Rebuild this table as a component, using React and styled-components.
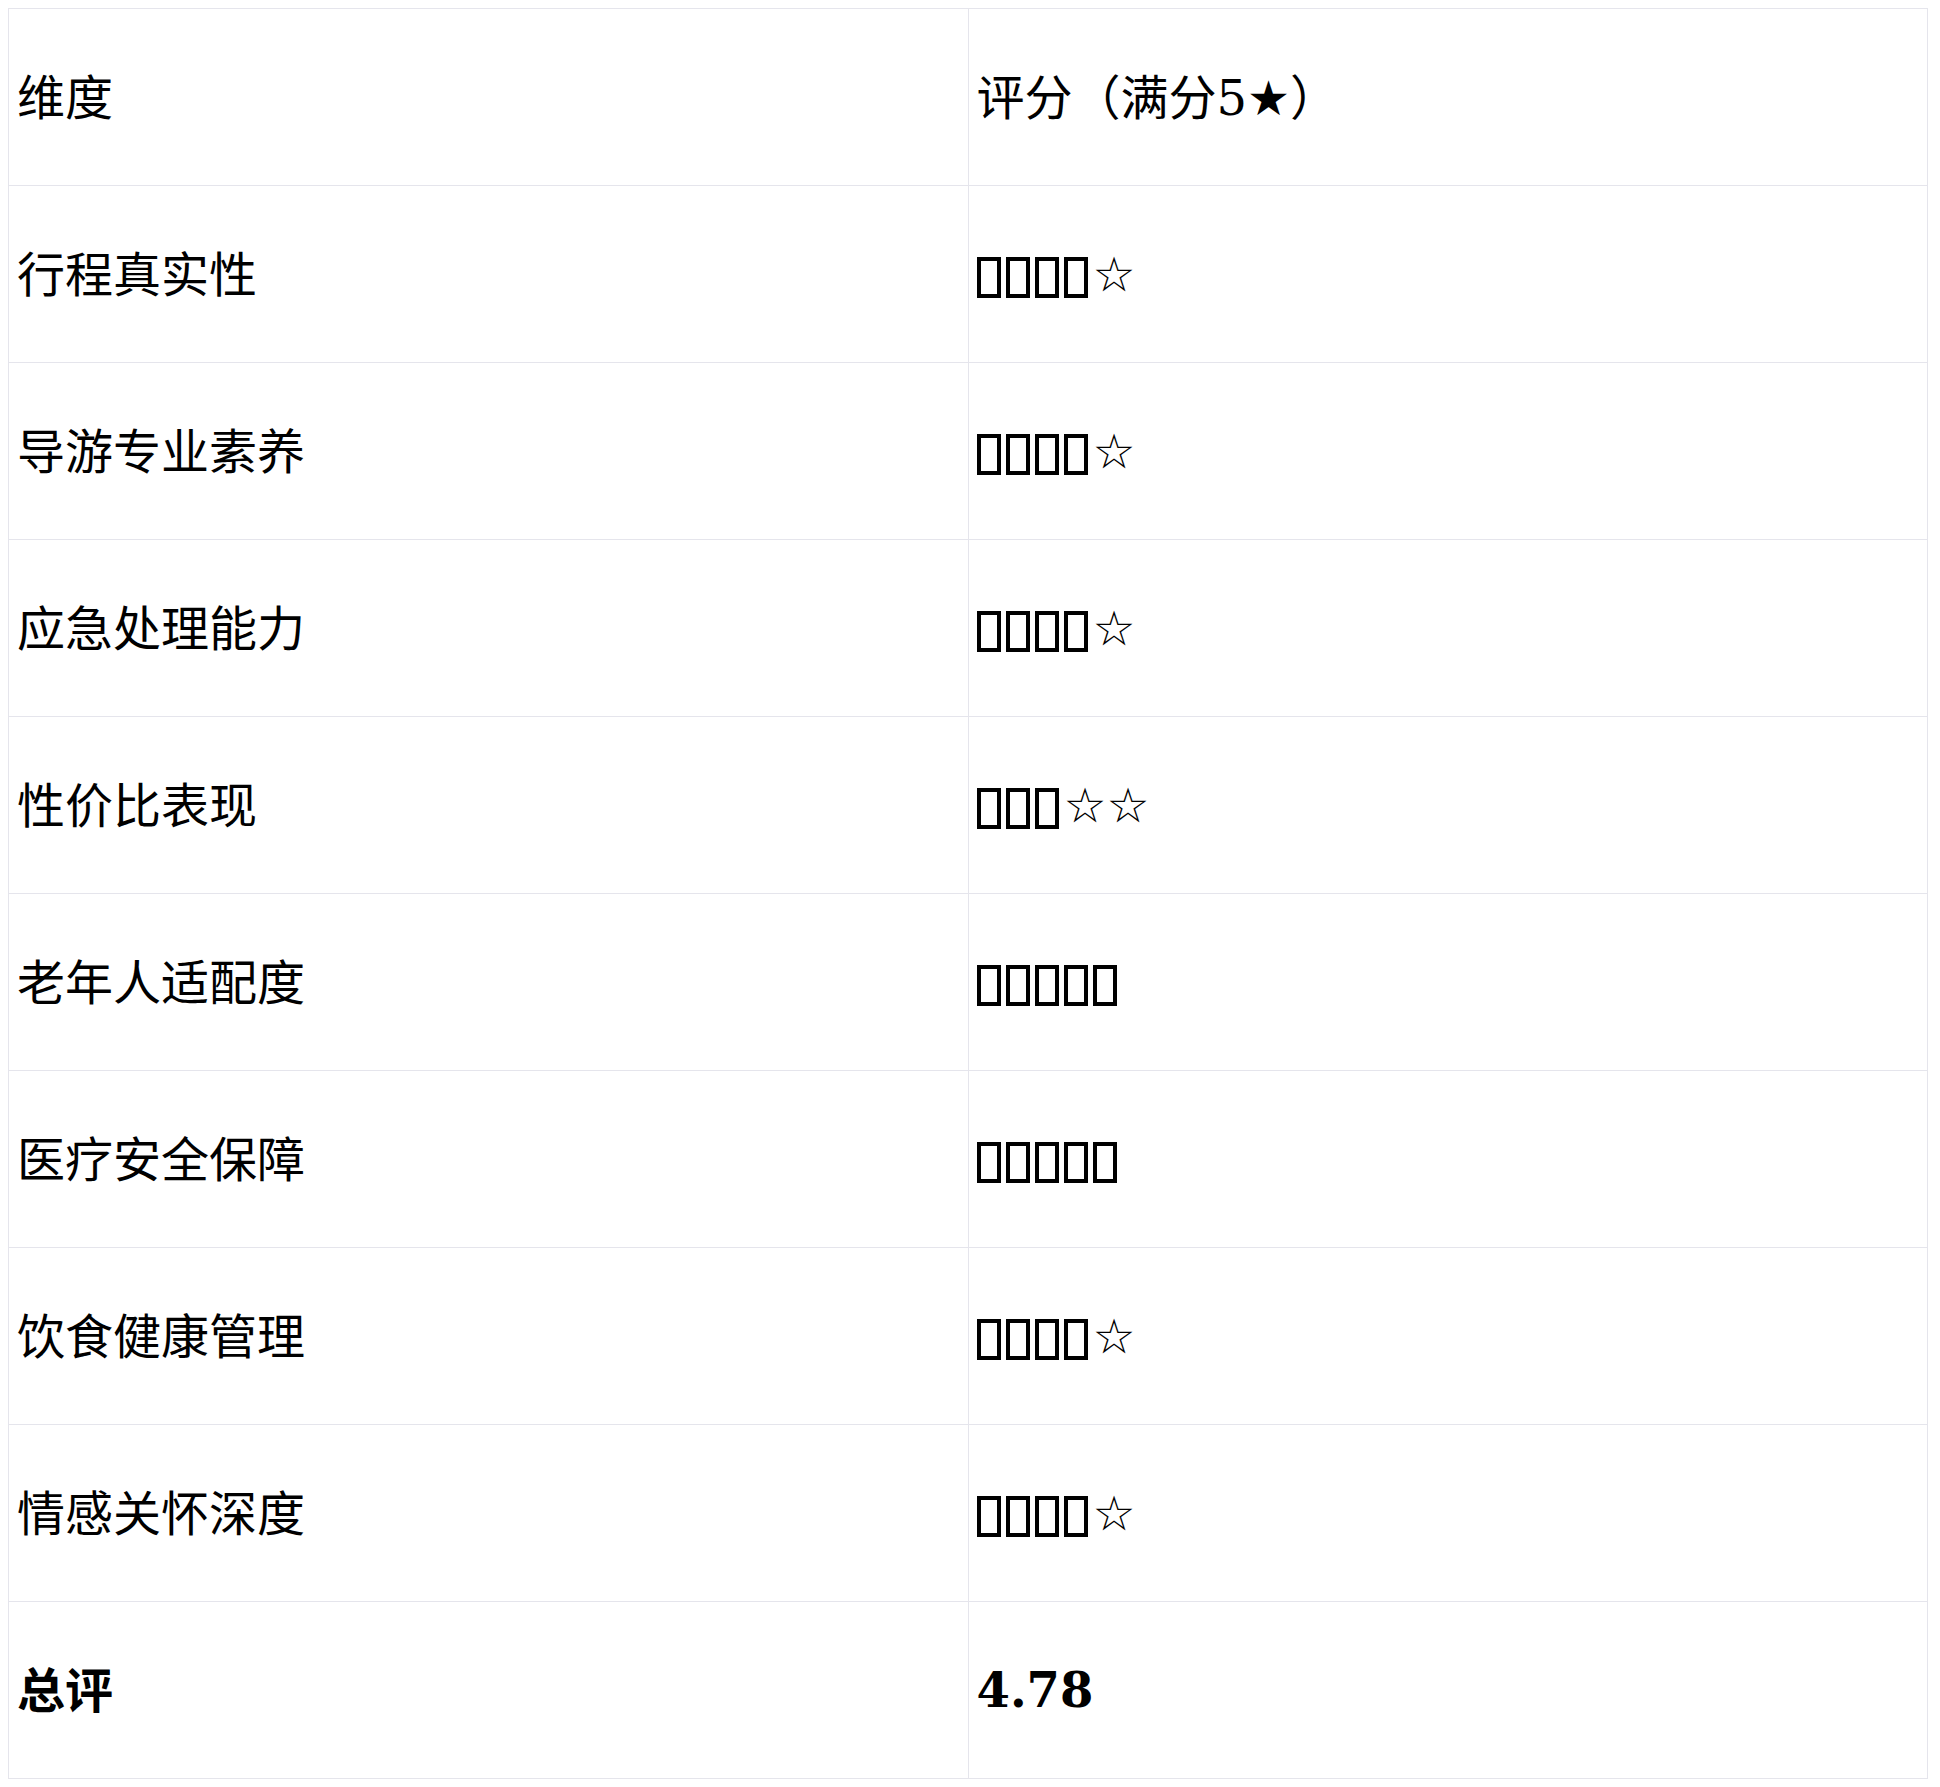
import React from "react";
import styled, { createGlobalStyle } from "styled-components";

const Global = createGlobalStyle`
  body {
    margin: 8px;
    background: #ffffff;
    font-family: "DejaVu Serif", "DejaVu Sans", "Noto Sans CJK SC", serif;
  }
`;

const Table = styled.table`
  width: 1920px;
  border-collapse: collapse;
  table-layout: fixed;
  font-size: 48px;
  color: #000;
`;

const Cell = styled.td`
  width: 50%;
  border: 1px solid #e5e5ec;
  padding: ${(p) => (p.$cjk ? "5px 8px 11px" : "8px")};
  height: 160px;
  vertical-align: middle;
  text-align: left;
  white-space: nowrap;
  font-weight: ${(p) => (p.$bold ? 700 : 400)};
`;

/* the reference shows the ⭐ emoji as missing-glyph boxes */
const Tofu = styled.span`
  display: inline-block;
  box-sizing: border-box;
  width: 24px;
  height: 41px;
  margin-right: 5px;
  border: 4px solid #000;
  vertical-align: -7px;
  overflow: hidden;
  color: transparent;
  font-size: 16px;
  line-height: 30px;
`;

const EmptyStar = styled.span`
  font-family: "DejaVu Sans", sans-serif;
`;

const Rating = ({ full, empty }) => (
  <>
    {Array.from({ length: full }).map((_, i) => (
      <Tofu key={i}>⭐</Tofu>
    ))}
    {empty > 0 && <EmptyStar>{"☆".repeat(empty)}</EmptyStar>}
  </>
);

const rows = [
  ["行程真实性", 4, 1],
  ["导游专业素养", 4, 1],
  ["应急处理能力", 4, 1],
  ["性价比表现", 3, 2],
  ["老年人适配度", 5, 0],
  ["医疗安全保障", 5, 0],
  ["饮食健康管理", 4, 1],
  ["情感关怀深度", 4, 1],
];

export default function App() {
  return (
    <>
      <Global />
      <Table>
        <tbody>
          <tr>
            <Cell $cjk>维度</Cell>
            <Cell $cjk>评分（满分5★）</Cell>
          </tr>
          {rows.map(([a, f, e], i) => (
            <tr key={i}>
              <Cell $cjk>{a}</Cell>
              <Cell>
                <Rating full={f} empty={e} />
              </Cell>
            </tr>
          ))}
          <tr>
            <Cell $cjk $bold>总评</Cell>
            <Cell $bold>4.78</Cell>
          </tr>
        </tbody>
      </Table>
    </>
  );
}
